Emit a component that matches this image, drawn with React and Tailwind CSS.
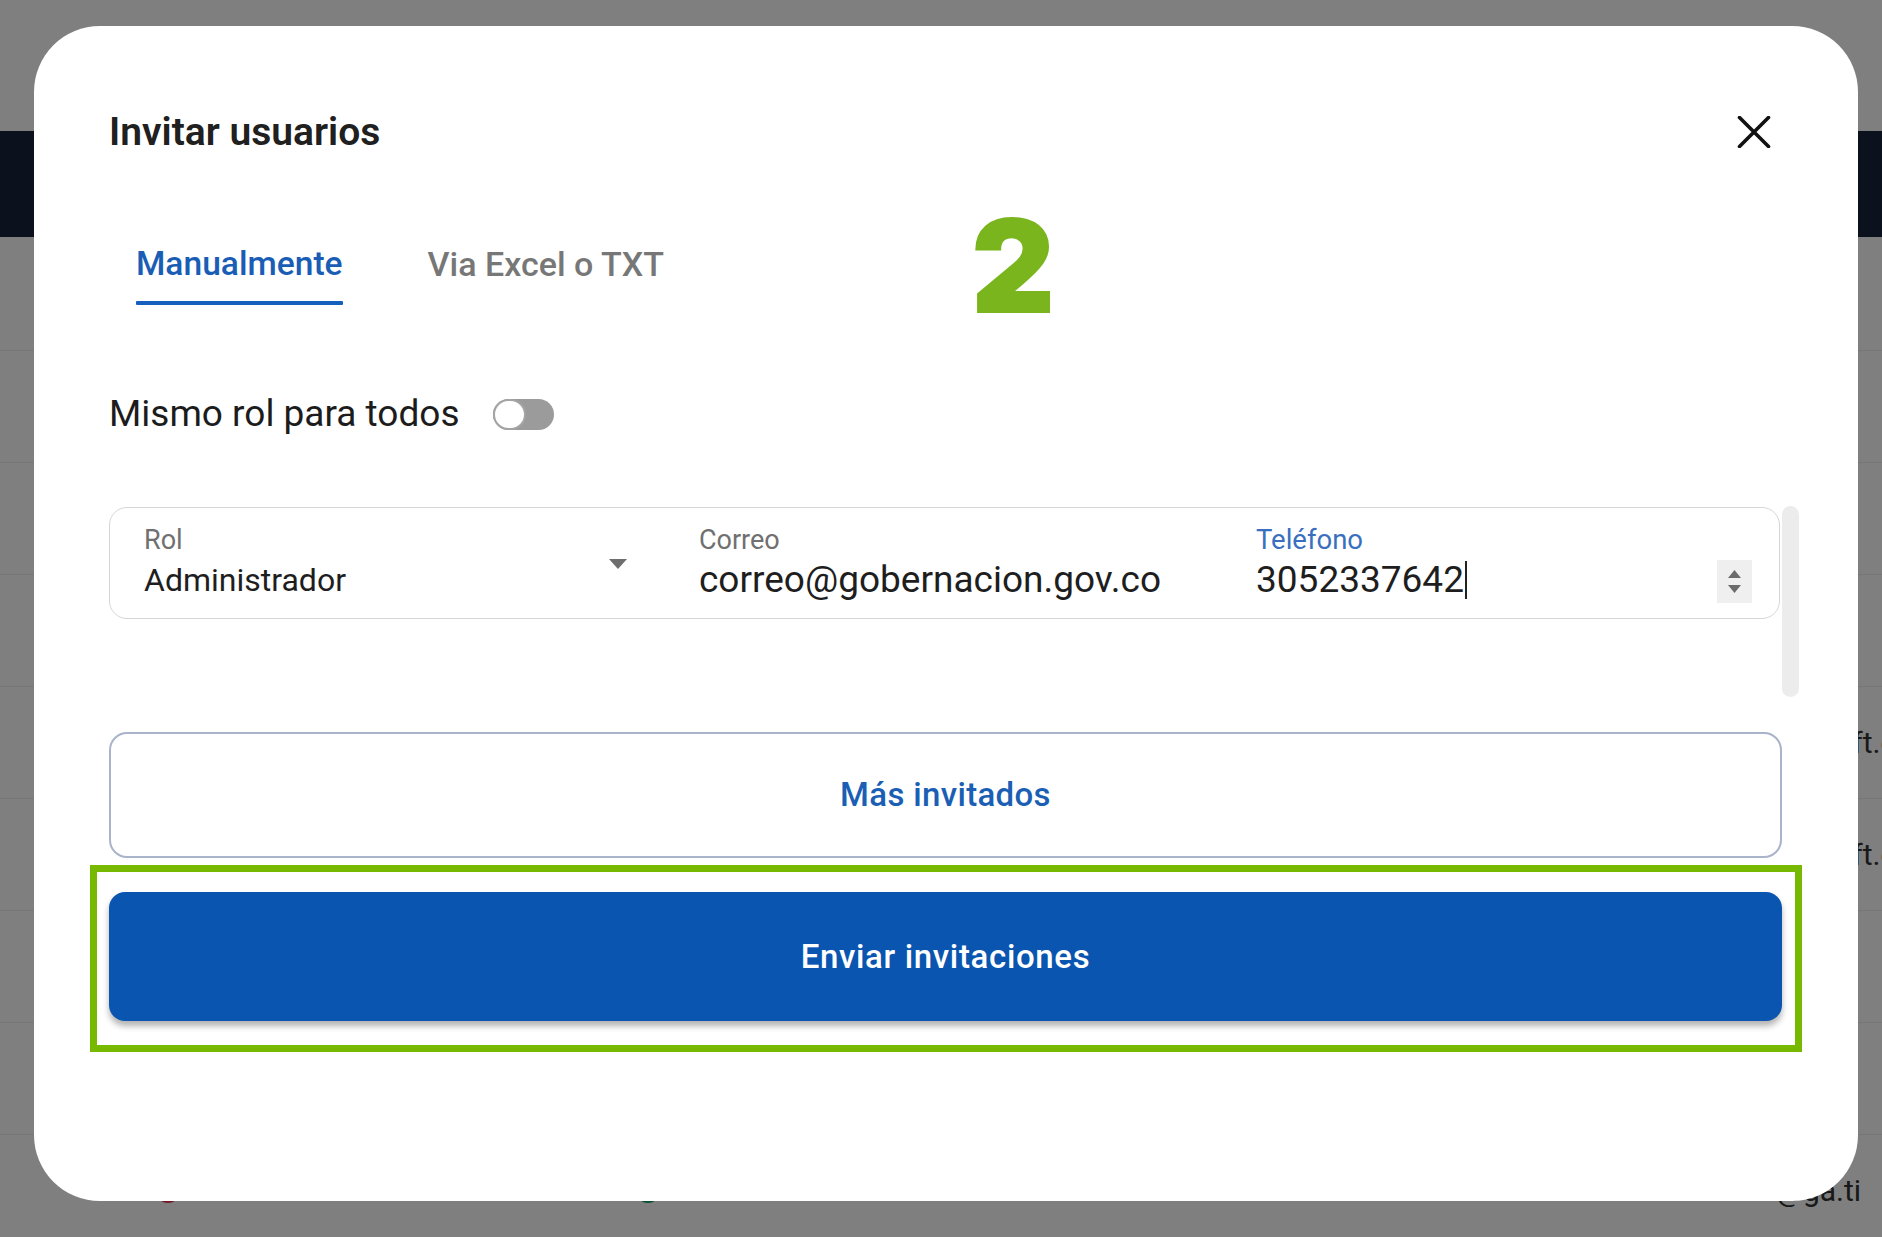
import React from "react";

const rows = [
  { text: "" },
  { text: "" },
  { text: "" },
  { text: "admin@microsoft.com" },
  { text: "admin@microsoft.com" },
  { text: "" },
  { text: "" },
];

function CloseIcon() {
  return (
    <svg width="34" height="32" viewBox="0 0 34 32" fill="none">
      <path d="M2.5 1.5 L31.5 30.5 M31.5 1.5 L2.5 30.5" stroke="#111111" strokeWidth="3.6" strokeLinecap="round" />
    </svg>
  );
}

function Toggle() {
  return (
    <div className="relative w-[61px] h-[31px] rounded-full bg-[#9b9b9b]">
      <div className="absolute left-0 top-0 w-[33px] h-[31px] rounded-full bg-white border-[2px] border-[#a4a4a4]" />
    </div>
  );
}

export default function App() {
  return (
    <div className="relative w-[1882px] h-[1237px] overflow-hidden bg-white font-[Roboto,sans-serif]">
      {/* page behind the dialog */}
      <div className="h-[131px] bg-white" />
      <div className="h-[106px] bg-[#16233a]" />
      <div className="h-[113px] bg-white" />
      {rows.map((row, i) => (
        <div key={i} className="h-[112px] border-t border-[#ececec] flex items-center">
          <div className="w-[1633px] shrink-0" />
          <span className="shrink-0 text-[30px] text-[#333] whitespace-nowrap">{row.text}</span>
        </div>
      ))}
      <div className="h-[112px] border-t border-[#ececec] flex items-center">
        <div className="w-[156px] shrink-0" />
        <div className="w-[24px] h-[24px] shrink-0 rounded-full bg-[#e0344f]" />
        <div className="w-[456px] shrink-0" />
        <div className="w-[24px] h-[24px] shrink-0 rounded-full bg-[#16a062]" />
        <div className="w-[1116px] shrink-0" />
        <span className="shrink-0 text-[30px] text-[#333] whitespace-nowrap">@ga.ti</span>
      </div>

      {/* overlay */}
      <div className="absolute inset-0 bg-black/50" />

      {/* dialog */}
      <div className="absolute left-[34px] top-[26px] w-[1824px] h-[1175px] rounded-[66px] bg-white pl-[75px] pr-[76px] pt-[83px] flex flex-col">
        <div className="h-[46px] flex items-center justify-between">
          <h2 className="text-[39px] leading-[46px] font-semibold text-[#202020]">Invitar usuarios</h2>
          <div className="mr-[11px]">
            <CloseIcon />
          </div>
        </div>

        <div className="mt-[89px] pl-[27px] flex gap-[85px]">
          <div className="flex flex-col">
            <span className="text-[33.6px] leading-[40px] font-medium text-[#1a5db5]">Manualmente</span>
            <div className="mt-[17px] h-[4px] bg-[#1560bd] rounded-[1px]" />
          </div>
          <span className="text-[34px] leading-[40px] font-medium text-[#777777]">Via Excel o TXT</span>
        </div>

        <div className="mt-[89px] h-[40px] flex items-center gap-[33px]">
          <span className="text-[37px] leading-[40px] text-[#1c1c1c]">Mismo rol para todos</span>
          <Toggle />
        </div>

        <div className="mt-[73px] flex gap-[2px] mr-[-17px]">
          <div className="flex-1 h-[112px] rounded-[18px] border-[1.5px] border-[#d6d6d6] pl-[34px] pr-[27px] pt-[17px] flex items-start">
            <div className="w-[505px] pr-[22px] flex items-start justify-between">
              <div className="flex flex-col">
                <span className="text-[27px] leading-[30px] text-[#707070]">Rol</span>
                <span className="mt-[5px] text-[32px] leading-[40px] text-[#1e1e1e]">Administrador</span>
              </div>
              <svg width="18" height="10" viewBox="0 0 18 10" className="mt-[34px]">
                <polygon points="0,0 18,0 9,10" fill="#6e6e6e" />
              </svg>
            </div>
            <div className="ml-[50px] w-[557px] flex flex-col">
              <span className="text-[27px] leading-[30px] text-[#707070]">Correo</span>
              <span className="mt-[5px] text-[37px] leading-[40px] text-[#1e1e1e]">correo@gobernacion.gov.co</span>
            </div>
            <div className="flex-1 flex justify-between">
              <div className="flex flex-col">
                <span className="text-[27.5px] leading-[30px] text-[#3a6fbf]">Teléfono</span>
                <span className="mt-[5px] text-[37px] leading-[40px] text-[#1e1e1e] flex items-center">
                  3052337642
                  <span className="ml-[1px] w-[2px] h-[38px] bg-[#222]" />
                </span>
              </div>
              <div className="mt-[35px] w-[35px] h-[43px] bg-[#efefef] flex flex-col items-center justify-center gap-[7px]">
                <svg width="13" height="8" viewBox="0 0 13 8">
                  <polygon points="6.5,0 13,8 0,8" fill="#6b6b6b" />
                </svg>
                <svg width="13" height="8" viewBox="0 0 13 8">
                  <polygon points="0,0 13,0 6.5,8" fill="#6b6b6b" />
                </svg>
              </div>
            </div>
          </div>
          <div className="w-[17px] h-[191px] -mt-[1px] rounded-full bg-[#ececec]" />
        </div>

        <button className="mt-[35px] h-[126px] rounded-[18px] border-[2px] border-[#a9b3ca] bg-white text-[33px] font-medium text-[#1b5fb4] tracking-[0.01em]">
          Más invitados
        </button>

        <div className="mt-[7px] ml-[-19px] mr-[-20px] border-[7px] border-[#77b800] pt-[20px] pb-[24px] pl-[12px] pr-[13px]">
          <button className="w-full h-[129px] rounded-[16px] bg-[#0a55b0] shadow-[0_5px_6px_rgba(0,0,0,0.3)] text-[33px] font-medium text-white tracking-[0.02em]">
            Enviar invitaciones
          </button>
        </div>

        {/* step number annotation */}
        <span className="absolute left-[938px] top-[177px] text-[127px] leading-none font-black text-[#7ab51d] font-[Inter,sans-serif] [-webkit-text-stroke:2px_#7ab51d]">
          2
        </span>
      </div>
    </div>
  );
}
